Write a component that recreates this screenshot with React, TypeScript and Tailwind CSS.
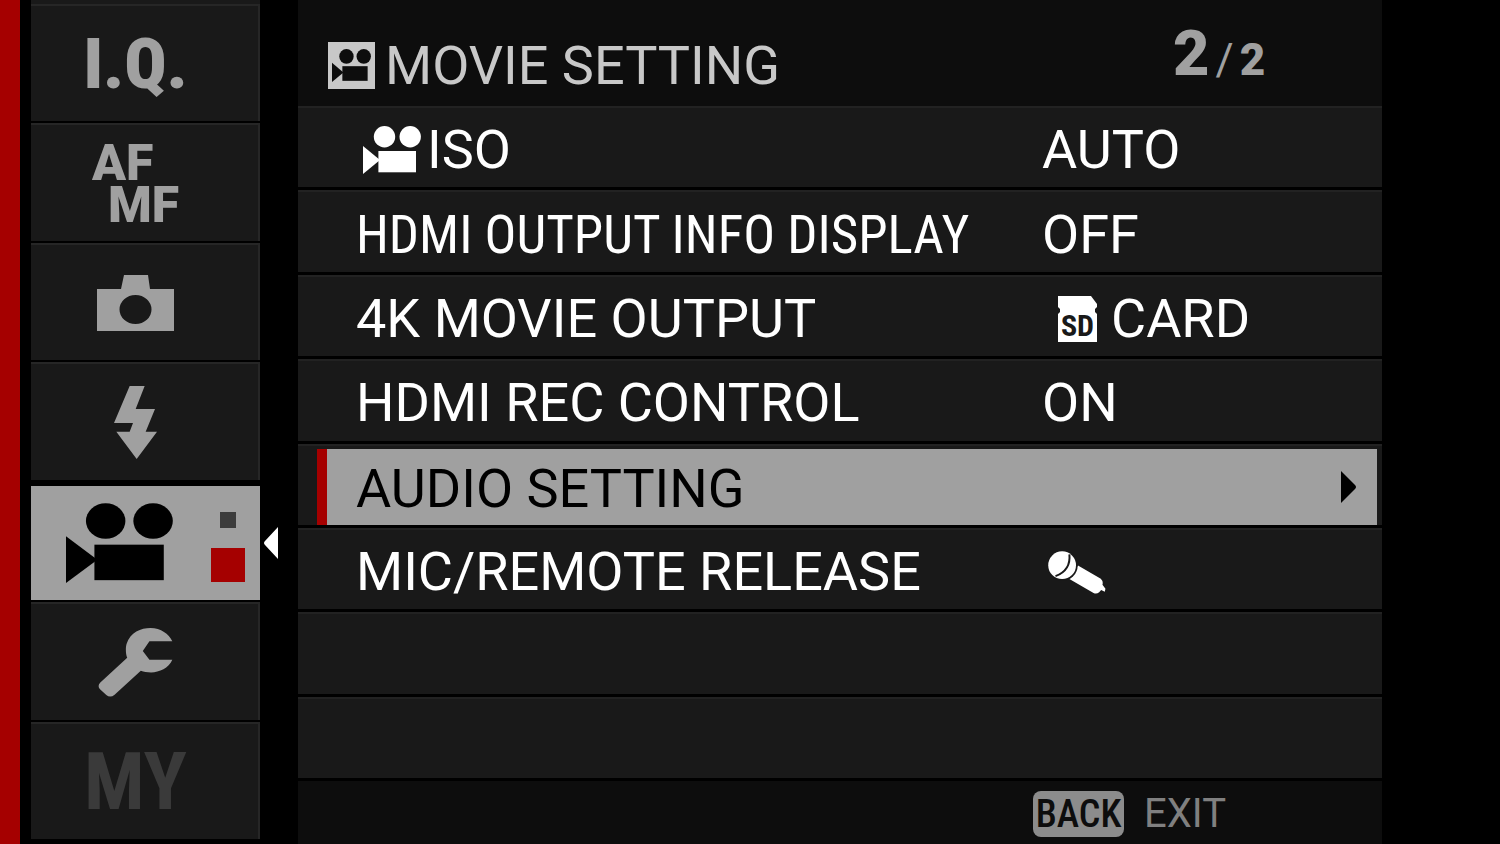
import type { ReactNode } from "react";

function MovieIcon({ className }: { className: string }) {
  return (
    <svg viewBox="0 0 58 48" preserveAspectRatio="none" fill="currentColor" aria-hidden="true" className={className}>
      <circle cx="21.5" cy="10.8" r="10.7" />
      <circle cx="47.2" cy="10.8" r="10.7" />
      <rect x="15.4" y="25" width="37.6" height="21.3" />
      <path d="M0 20 17 34 0 48Z" />
    </svg>
  );
}

function CameraIcon() {
  return (
    <svg viewBox="0 0 77 56" aria-hidden="true" className="h-14 w-[77px]">
      <path
        fill="currentColor"
        fillRule="evenodd"
        d="M0 14H24L27 0H51L53 14H77V56H0ZM22.500 34.500a16 14.500 0 1 0 32 0a16 14.500 0 1 0 -32 0Z"
      />
    </svg>
  );
}

function FlashIcon() {
  return (
    <svg viewBox="0 0 129 219" fill="currentColor" aria-hidden="true" className="h-[73px] w-[43px]">
      <path d="M47 0H92L65 69H123L95 137H129L68 219 7 137H47L57 111H0Z" />
    </svg>
  );
}

function WrenchIcon() {
  return (
    <svg viewBox="296 472 224 208" fill="currentColor" aria-hidden="true" className="h-[69px] w-[75px]">
      <path d="M519 512H450L430 541 450 568H519C508 593 480 606 455 606 443 606 433 604 424 601L345 673Q332 684 320 674L301 657Q292 646 302 636L383 562C378 550 378 530 381 520 392 485 425 472 453 472 485 472 508 490 519 512Z" />
    </svg>
  );
}

function MicIcon() {
  return (
    <svg viewBox="144 356 174 130" aria-hidden="true" className="ml-1.5 h-[43px] w-[58px]">
      <path fill="#fff" d="M234 400 303 440Q311 448 308 458L317 470 315 479 304 474 298 481Q290 487 281 483L208 441Z" />
      <circle cx="187" cy="400" r="46" fill="#191919" />
      <circle cx="186" cy="399" r="42" fill="#fff" />
      <path fill="none" stroke="#191919" strokeWidth="6" d="M208 366Q213 414 166 432" />
    </svg>
  );
}

function SdIcon() {
  return (
    <svg viewBox="0 0 39 46" role="img" aria-label="SD" className="ml-4 h-[46px] w-[39px] overflow-visible">
      <path fill="#fff" d="M0 0H33L39 8V11L37 13V16L39 18V46H0V18L2 16V13L0 11Z" />
      <text
        x="19.500"
        y="40"
        textAnchor="middle"
        fill="#191919"
        className="font-['Roboto_Condensed','Roboto',sans-serif] text-[30px] font-bold"
      >
        SD
      </text>
    </svg>
  );
}

const condensed = "font-['Roboto_Condensed','Roboto',sans-serif] leading-none";

type Tab = { label: string; art: ReactNode; active?: boolean };

const tabs: Tab[] = [
  { label: "Image quality", art: <span className={`${condensed} text-[70px] font-black`}>I.Q.</span> },
  {
    label: "Focus",
    art: (
      <span className="flex flex-col text-left text-[50px] leading-[42px] font-black">
        <span>AF</span>
        <span className="pl-4">MF</span>
      </span>
    ),
  },
  { label: "Shooting", art: <CameraIcon /> },
  { label: "Flash", art: <FlashIcon /> },
  { label: "Movie", art: <MovieIcon className="mr-8 h-20 w-[107px] text-black" />, active: true },
  { label: "Set up", art: <WrenchIcon /> },
  { label: "My menu", art: <span className={`${condensed} text-[80px] font-bold text-[#3a3a3a]`}>MY</span> },
];

function TabButton({ label, art, active }: Tab) {
  return (
    <button
      type="button"
      aria-label={label}
      aria-current={active ? "page" : undefined}
      className={`relative flex w-full flex-1 items-center justify-center border-b-2 border-black pr-5 text-[#a0a0a0] ${
        active ? "border-t-4 bg-[#a0a0a0]" : "bg-[#191919] pt-[3px] shadow-[inset_-2px_2px_0_#262626]"
      }`}
    >
      {art}
      {active && (
        <>
          <span className="absolute right-[15px] flex flex-col items-center gap-5 pt-2">
            <span className="size-4 bg-[#3c3c3c]" />
            <span className="size-[34px] bg-[#a50000]" />
          </span>
          <svg viewBox="0 0 14 32" fill="#fff" aria-hidden="true" className="absolute left-full ml-1 h-8 w-3.5">
            <path d="M14 0V32L1 18Q-1 16 1 14Z" />
          </svg>
        </>
      )}
    </button>
  );
}

type Setting = { name?: string; icon?: ReactNode; value?: ReactNode; narrow?: boolean; active?: boolean };

const settings: Setting[] = [
  { name: "ISO", icon: <MovieIcon className="ml-[7px] h-12 w-[58px]" />, value: "AUTO" },
  { name: "HDMI OUTPUT INFO DISPLAY", value: "OFF", narrow: true },
  {
    name: "4K MOVIE OUTPUT",
    value: (
      <>
        <SdIcon />
        <span className="ml-3.5">CARD</span>
      </>
    ),
  },
  { name: "HDMI REC CONTROL", value: "ON" },
  { name: "AUDIO SETTING", active: true },
  { name: "MIC/REMOTE RELEASE", value: <MicIcon /> },
  {},
  {},
];

function SettingRow({ name, icon, value, narrow, active }: Setting) {
  return (
    <li className="flex flex-1 border-b-[3px] border-black bg-[#191919] shadow-[inset_0_2px_0_#222]">
      {active ? (
        <button
          type="button"
          className="mt-[5px] mr-[5px] ml-[19px] flex flex-1 items-center justify-between border-l-[10px] border-[#a50000] bg-[#a0a0a0] pr-[21px] pl-[29px] text-black"
        >
          <span className="pt-1">{name}</span>
          <svg viewBox="0 0 15 32" fill="#000" aria-hidden="true" className="h-8 w-[15px]">
            <path d="M0 0V32L14 18Q16 16 14 14Z" />
          </svg>
        </button>
      ) : (
        name && (
          <button type="button" className="grid flex-1 grid-cols-[1fr_340px] items-center pt-[7px] pl-[58px] text-left">
            <span className="flex items-center gap-1.5 whitespace-nowrap">
              {icon}
              <span className={narrow ? "font-['Roboto_Condensed','Roboto',sans-serif] text-[53px]" : undefined}>
                {name}
              </span>
            </span>
            <span className="flex items-center">{value}</span>
          </button>
        )
      )}
    </li>
  );
}

export default function App() {
  return (
    <div className="flex min-h-screen bg-black font-['Roboto','Liberation_Sans',sans-serif]">
      <div className="w-5 bg-[#a50000]" />
      <nav aria-label="Menu" className="ml-[11px] flex w-[229px] flex-col pb-[3px]">
        <div className="h-1 bg-[#191919]" />
        {tabs.map((tab) => (
          <TabButton key={tab.label} {...tab} />
        ))}
      </nav>
      <main className="mr-[118px] ml-[38px] flex flex-1 flex-col text-[54px] leading-[64px] text-white">
        <header className="grid h-[106px] grid-cols-[1fr_340px] items-center bg-[#0d0d0d] pl-[30px]">
          <h1 className="flex items-center gap-2.5 pt-6 text-[#c8c8c8]">
            <span className="flex size-[47px] items-center justify-center bg-[#c8c8c8]">
              <MovieIcon className="h-[33px] w-[39px] text-[#0d0d0d]" />
            </span>
            <span className="pt-0.5">MOVIE SETTING</span>
          </h1>
          <p className="flex items-baseline gap-1.5 pt-2 pl-[131px] text-[63px] font-black text-[#a0a0a0]">
            2<span className="text-[44px] font-normal">/</span>
            <span className="text-[44px]">2</span>
          </p>
        </header>
        <ul className="flex flex-1 flex-col">
          {settings.map((setting, index) => (
            <SettingRow key={index} {...setting} />
          ))}
        </ul>
        <footer className="flex h-[63px] justify-end bg-[#0d0d0d]">
          <button type="button" className="flex w-[349px] items-center gap-5 pt-0.5 text-[40px] leading-[46px] text-[#808080]">
            <kbd className="w-[91px] rounded-lg bg-[#8c8c8c] text-center font-['Roboto_Condensed','Roboto',sans-serif] text-[38px] font-medium text-[#0d0d0d]">
              BACK
            </kbd>
            EXIT
          </button>
        </footer>
      </main>
    </div>
  );
}
